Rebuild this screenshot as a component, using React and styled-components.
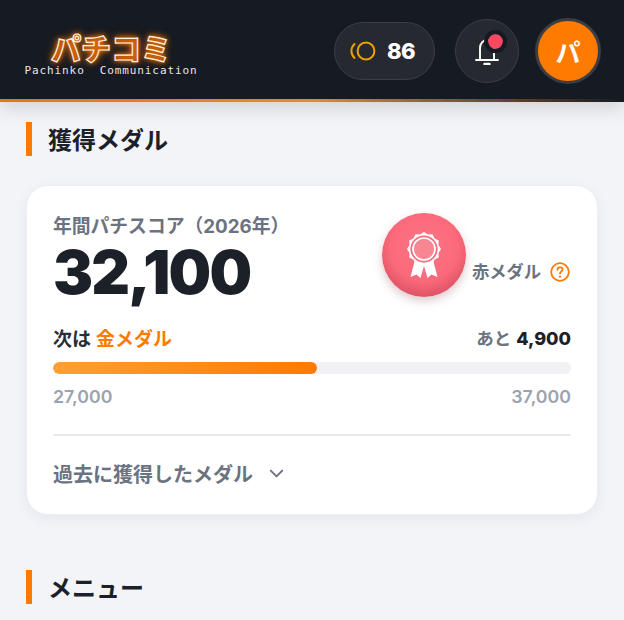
import React from "react"
import styled, { createGlobalStyle } from "styled-components"
import { ChevronDown } from "lucide-react"

const GlobalStyle = createGlobalStyle`
  html, body {
    margin: 0;
    padding: 0;
    background: #f3f4f8;
  }
  body {
    font-family: Inter, "Noto Sans CJK JP", sans-serif;
    overflow: hidden;
  }
`

const Page = styled.div`
  width: 624px;
  height: 620px;
  overflow: hidden;
`

const Header = styled.header`
  position: relative;
  box-sizing: border-box;
  height: 102px;
  padding: 18px 23px 0 25px;
  display: flex;
  justify-content: space-between;
  align-items: flex-start;
  background: #161a22;
  box-shadow: 0 6px 18px rgba(0, 0, 0, 0.14);
  &::after {
    content: "";
    position: absolute;
    left: 0;
    right: 0;
    bottom: 0;
    height: 3px;
    background: linear-gradient(90deg, #e8740c 0%, #e08a38 50%, #161a22 100%);
  }
`

const Logo = styled.div`
  display: flex;
  flex-direction: column;
  align-items: center;
  width: 172px;
`

const LogoMark = styled.div`
  font-family: "Noto Sans CJK JP", sans-serif;
  font-weight: 900;
  font-size: 30px;
  line-height: 30px;
  height: 30px;
  margin-top: 14px;
  color: rgba(190, 88, 10, 0.6);
  -webkit-text-stroke: 1.2px #fff3e4;
  text-shadow: 0 0 5px #ff7a00, 0 0 9px #ff7a00;
`

const LogoSub = styled.div`
  font-family: "DejaVu Sans Mono", monospace;
  font-size: 11px;
  line-height: 12px;
  margin-top: 3px;
  color: #e6e6e6;
  white-space: pre;
  letter-spacing: 0.9px;
`

const HeaderActions = styled.div`
  display: flex;
  align-items: center;
  gap: 19px;
  height: 66px;
`

const CoinPill = styled.div`
  box-sizing: border-box;
  width: 101px;
  height: 58px;
  margin-right: 1px;
  padding-left: 15px;
  display: flex;
  align-items: center;
  gap: 11px;
  border-radius: 29px;
  background: #262930;
  border: 1px solid #3b3e45;
`

const CoinCount = styled.span`
  font-weight: 800;
  font-size: 22px;
  letter-spacing: -0.5px;
  color: #fff;
`

const BellButton = styled.div`
  position: relative;
  box-sizing: border-box;
  width: 64px;
  height: 64px;
  display: flex;
  align-items: center;
  justify-content: center;
  border-radius: 50%;
  background: #262930;
  border: 1px solid #3b3e45;
`

const BellDot = styled.span`
  position: absolute;
  top: 11px;
  right: 12px;
  box-sizing: border-box;
  width: 21px;
  height: 21px;
  border-radius: 50%;
  background: #f9485f;
  border: 3px solid #161a22;
  background-clip: padding-box;
  box-shadow: 0 0 0 1px #161a22;
`

const Avatar = styled.div`
  box-sizing: border-box;
  width: 66px;
  height: 66px;
  margin-left: -3px;
  display: flex;
  align-items: center;
  justify-content: center;
  border-radius: 50%;
  background: #ff7a00;
  border: 3px solid #3a3d44;
  color: #fff;
  font-family: "Noto Sans CJK JP", sans-serif;
  font-weight: 700;
  font-size: 25px;
`

const Main = styled.main`
  padding: 20px 26px 0 26px;
`

const SectionTitle = styled.h2`
  box-sizing: border-box;
  margin: ${(p) => p.$top || 0}px 0 0 0;
  height: 34px;
  padding: 0 0 2px 16px;
  display: flex;
  align-items: center;
  border-left: 6px solid #ff7a00;
  font-family: "Noto Sans CJK JP", sans-serif;
  font-weight: 700;
  font-size: 24px;
  color: #1c2028;
`

const Card = styled.section`
  box-sizing: border-box;
  width: 572px;
  height: 330px;
  margin: 29px 0 0 0;
  padding: 27px 26px 0;
  border-radius: 22px;
  background: #fff;
  border: 1px solid #eceef3;
  box-shadow: 0 4px 14px rgba(30, 35, 60, 0.06);
`

const ScoreRow = styled.div`
  display: flex;
  justify-content: space-between;
  height: 110px;
`

const ScoreLabel = styled.div`
  font-weight: 700;
  font-size: 18.8px;
  line-height: 27px;
  color: #6b7280;
`

const ScoreValue = styled.div`
  font-weight: 900;
  font-size: 60px;
  line-height: 64px;
  letter-spacing: -1.8px;
  color: #1c2028;
`

const MedalBox = styled.div`
  display: flex;
  align-items: flex-start;
`

const MedalBall = styled.div`
  width: 84px;
  height: 84px;
  display: flex;
  align-items: center;
  justify-content: center;
  border-radius: 50%;
  background: radial-gradient(circle at 50% 40%, #fc7485 0%, #fb6a7b 52%, #d95063 80%, #a8404e 100%);
  box-shadow: 0 4px 10px rgba(120, 40, 50, 0.25);
`

const MedalName = styled.div`
  display: flex;
  align-items: center;
  gap: 9px;
  margin: 45px 1px 0 6px;
  font-weight: 700;
  font-size: 17.25px;
  line-height: 28px;
  color: #6b7280;
`

const NextRow = styled.div`
  display: flex;
  justify-content: space-between;
  align-items: center;
  height: 28px;
`

const NextText = styled.div`
  font-weight: 700;
  font-size: 19px;
  color: #2a2e36;
`

const NextMedal = styled.span`
  color: #ff7a00;
  margin-left: 5px;
`

const Remain = styled.div`
  font-weight: 700;
  font-size: 17.5px;
  color: #6b7280;
`

const RemainValue = styled.b`
  font-weight: 800;
  font-size: 18px;
  color: #1c2028;
  margin-left: 5px;
`

const Track = styled.div`
  height: 12px;
  margin-top: 11px;
  border-radius: 6px;
  background: #f0f0f5;
  overflow: hidden;
`

const Fill = styled.div`
  height: 100%;
  border-radius: 6px;
  background: linear-gradient(90deg, #ffa033 0%, #ff7a00 100%);
`

const RangeRow = styled.div`
  display: flex;
  justify-content: space-between;
  margin-top: 11px;
  font-weight: 600;
  font-size: 17.8px;
  line-height: 24px;
  color: #9ca3af;
`

const Divider = styled.div`
  height: 2px;
  margin-top: 25px;
  background: #e9eaf0;
`

const PastToggle = styled.div`
  display: flex;
  align-items: center;
  gap: 12px;
  height: 74px;
  font-weight: 700;
  font-size: 20px;
  color: #6b7280;
`

function CoinIcon() {
  return (
    <svg width="26" height="20" viewBox="0 0 26 20" fill="none" stroke="#eba200" strokeWidth="2">
      <circle cx="16" cy="10" r="8.4" />
      <path d="M4.5 3 A 9.5 9.5 0 0 0 4.5 17" strokeLinecap="round" />
    </svg>
  )
}

function BellIcon() {
  return (
    <svg width="24" height="28" viewBox="0 0 24 28" fill="none" stroke="#fff" strokeWidth="1.9" strokeLinecap="round">
      <path d="M5 23 V11 C5 6.5 8 3 12 3 C16 3 19 6.5 19 11 V23" />
      <path d="M1 23 H23" />
      <path d="M9.5 27 H14.5" strokeWidth="2.4" />
    </svg>
  )
}

function RibbonIcon() {
  const points = []
  for (let i = 0; i < 24; i++) {
    const r = i % 2 === 0 ? 17 : 15
    const a = (i * Math.PI) / 12
    points.push(`${17 + r * Math.sin(a)},${17 - r * Math.cos(a)}`)
  }
  return (
    <svg width="34" height="46" viewBox="0 0 34 46">
      <path d="M8 28 L3.5 45 L9.5 42.5 L13.5 46 L17 34 L20.5 46 L24.5 42.5 L30.5 45 L26 28 Z" fill="#fff" />
      <polygon points={points.join(" ")} fill="#fff" />
      <circle cx="17" cy="17" r="13.6" fill="#f66a7a" />
      <circle cx="17" cy="17" r="11" fill="#f88794" stroke="#fff" strokeWidth="1.7" />
    </svg>
  )
}

function HelpIcon() {
  return (
    <svg width="20" height="20" viewBox="0 0 20 20" fill="none" stroke="#ff7a00" strokeWidth="1.8" strokeLinecap="round">
      <circle cx="10" cy="10" r="8.8" />
      <path d="M7.4 7.8 C7.4 6.2 8.6 5.3 10 5.3 C11.5 5.3 12.6 6.2 12.6 7.6 C12.6 9.4 10 9.6 10 11.6" />
      <path d="M10 14.6 V14.7" strokeWidth="2.2" />
    </svg>
  )
}

export default function App() {
  const min = 27000
  const max = 37000
  const score = 32100
  const progress = ((score - min) / (max - min)) * 100

  return (
    <Page>
      <GlobalStyle />
      <Header>
        <Logo>
          <LogoMark>パチコミ</LogoMark>
          <LogoSub>{"Pachinko  Communication"}</LogoSub>
        </Logo>
        <HeaderActions>
          <CoinPill>
            <CoinIcon />
            <CoinCount>86</CoinCount>
          </CoinPill>
          <BellButton>
            <BellIcon />
            <BellDot />
          </BellButton>
          <Avatar>パ</Avatar>
        </HeaderActions>
      </Header>
      <Main>
        <SectionTitle>獲得メダル</SectionTitle>
        <Card>
          <ScoreRow>
            <div>
              <ScoreLabel>年間パチスコア（2026年）</ScoreLabel>
              <ScoreValue>32,100</ScoreValue>
            </div>
            <MedalBox>
              <MedalBall>
                <RibbonIcon />
              </MedalBall>
              <MedalName>
                赤メダル
                <HelpIcon />
              </MedalName>
            </MedalBox>
          </ScoreRow>
          <NextRow>
            <NextText>
              次は<NextMedal>金メダル</NextMedal>
            </NextText>
            <Remain>
              あと<RemainValue>4,900</RemainValue>
            </Remain>
          </NextRow>
          <Track>
            <Fill style={{ width: `${progress}%` }} />
          </Track>
          <RangeRow>
            <span>27,000</span>
            <span>37,000</span>
          </RangeRow>
          <Divider />
          <PastToggle>
            過去に獲得したメダル
            <ChevronDown size={23} strokeWidth={2} />
          </PastToggle>
        </Card>
        <SectionTitle $top={55}>メニュー</SectionTitle>
      </Main>
    </Page>
  )
}
